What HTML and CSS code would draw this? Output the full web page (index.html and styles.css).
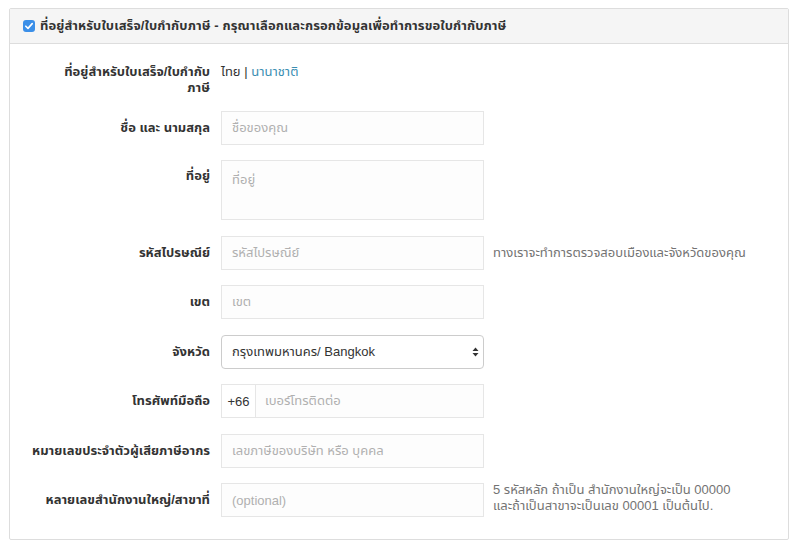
FILE: index.html
```html
<!DOCTYPE html>
<html lang="th">
<head>
<meta charset="utf-8">
<link rel="stylesheet" href="styles.css">
</head>
<body>
<div class="panel">
  <div class="panel-heading">
    <span class="check"><svg width="12" height="12" viewBox="0 0 12 12"><path d="M2.8 6.2 L5 8.4 L9.2 3.6" fill="none" stroke="#fff" stroke-width="1.6" stroke-linecap="round" stroke-linejoin="round"/></svg></span>
    <span class="heading-text">ที่อยู่สำหรับใบเสร็จ/ใบกำกับภาษี - กรุณาเลือกและกรอกข้อมูลเพื่อทำการขอใบกำกับภาษี</span>
  </div>
  <div class="panel-body">
    <div class="row row-top">
      <div class="label">ที่อยู่สำหรับใบเสร็จ/ใบกำกับ<br>ภาษี</div>
      <div class="static">ไทย <span class="sep">|</span> <a class="link">นานาชาติ</a></div>
    </div>
    <div class="row">
      <div class="label">ชื่อ และ นามสกุล</div>
      <div class="control"><div class="input ph">ชื่อของคุณ</div></div>
    </div>
    <div class="row row-start">
      <div class="label label-pad">ที่อยู่</div>
      <div class="control"><div class="input textarea ph">ที่อยู่</div></div>
    </div>
    <div class="row">
      <div class="label">รหัสไปรษณีย์</div>
      <div class="control"><div class="input ph">รหัสไปรษณีย์</div></div>
      <div class="help">ทางเราจะทำการตรวจสอบเมืองและจังหวัดของคุณ</div>
    </div>
    <div class="row">
      <div class="label">เขต</div>
      <div class="control"><div class="input ph">เขต</div></div>
    </div>
    <div class="row">
      <div class="label">จังหวัด</div>
      <div class="control">
        <div class="input select"><span>กรุงเทพมหานคร/ Bangkok</span>
          <svg width="7" height="10" viewBox="0 0 7 10"><path d="M0.5 4 L3.5 0.5 L6.5 4 Z M0.5 6 L3.5 9.5 L6.5 6 Z" fill="#333"/></svg>
        </div>
      </div>
    </div>
    <div class="row">
      <div class="label">โทรศัพท์มือถือ</div>
      <div class="control">
        <div class="group"><span class="addon">+66</span><div class="input ph grow">เบอร์โทรติดต่อ</div></div>
      </div>
    </div>
    <div class="row">
      <div class="label">หมายเลขประจำตัวผู้เสียภาษีอากร</div>
      <div class="control"><div class="input ph">เลขภาษีของบริษัท หรือ บุคคล</div></div>
    </div>
    <div class="row row-start">
      <div class="label label-pad2">หลายเลขสำนักงานใหญ่/สาขาที่</div>
      <div class="control"><div class="input ph">(optional)</div></div>
      <div class="help help-top">5 รหัสหลัก ถ้าเป็น สำนักงานใหญ่จะเป็น 00000<br>และถ้าเป็นสาขาจะเป็นเลข 00001 เป็นต้นไป.</div>
    </div>
  </div>
</div>
</body>
</html>
```
FILE: styles.css
```css
html, body {
  margin: 0;
  padding: 0;
  background: #fff;
}
body {
  padding: 8px 9px 0 9px;
  font-family: "Liberation Sans", "Noto Sans Thai", "Noto Sans", sans-serif;
  font-size: 13px;
  color: #333;
}
.panel {
  border: 1px solid #dddddd;
  border-radius: 2px;
  width: 780px;
  box-sizing: border-box;
}
.panel-heading {
  background: #f5f5f5;
  border-bottom: 1px solid #dddddd;
  height: 34px;
  display: flex;
  align-items: center;
  padding-left: 13px;
  gap: 5px;
}
.check {
  width: 12px;
  height: 12px;
  border-radius: 3px;
  background: #3b8fe8;
  display: flex;
  align-items: center;
  justify-content: center;
}
.heading-text {
  font-weight: bold;
  font-size: 13px;
  letter-spacing: 0.1px;
  color: #333;
}
.panel-body {
  padding: 20px 0 22px 0;
  display: flex;
  flex-direction: column;
  gap: 15.5px;
}
.row {
  display: grid;
  grid-template-columns: 200px 263px auto;
  column-gap: 11px;
  align-items: center;
}
.row-start { align-items: start; }
.row-top { align-items: start; margin-bottom: -1px; }
.label {
  text-align: right;
  font-weight: bold;
  font-size: 13px;
  line-height: 16px;
  color: #333;
}
.label-pad { padding-top: 8px; }
.label-pad2 { padding-top: 9px; }
.static {
  font-size: 13px;
  line-height: 16px;
  color: #333;
}
.sep { color: #333; }
.link { color: #3a8eb2; }
.input {
  box-sizing: border-box;
  height: 34px;
  border: 1px solid #e6e6e6;
  background: #fdfdfd;
  padding: 0 10px;
  display: flex;
  align-items: center;
  font-size: 13px;
  color: #333;
}
.ph { color: #b0b0b0; }
.textarea {
  height: 60px;
  align-items: flex-start;
  padding-top: 9px;
}
.select {
  border: 1px solid #cccccc;
  border-radius: 4px;
  background: #fff;
  justify-content: space-between;
  padding-right: 4px;
  color: #333;
}
.group {
  display: flex;
  height: 34px;
}
.addon {
  box-sizing: border-box;
  width: 34px;
  border: 1px solid #e6e6e6;
  border-right: none;
  background: #fff;
  display: flex;
  align-items: center;
  justify-content: center;
  font-size: 13px;
  color: #333;
}
.grow { flex: 1; padding-left: 9px; }
.help {
  margin-left: -2px;
  font-size: 13px;
  line-height: 16px;
  color: #737373;
}
.help-top { margin-top: -1px; }
```
